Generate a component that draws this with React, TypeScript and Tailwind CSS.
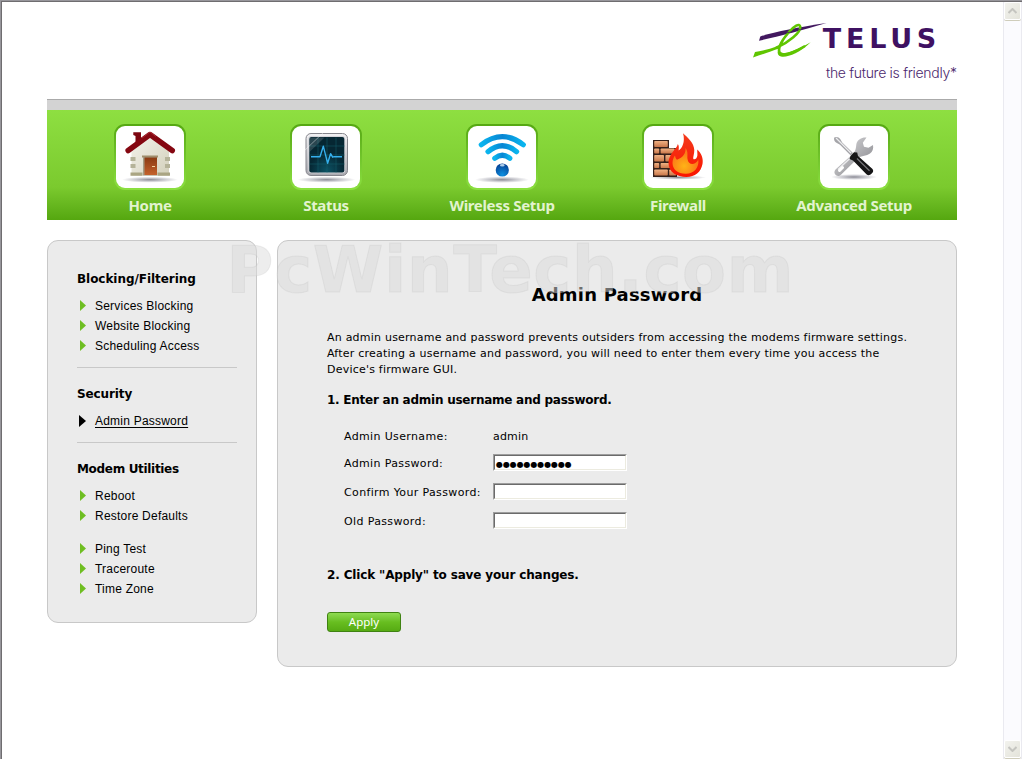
import type { ReactNode } from "react";

interface MenuItem {
  label: string;
  icon: ReactNode;
}

interface LinkGroup {
  title: string;
  tracking: string;
  links: { label: string; active?: boolean; spaced?: boolean }[];
}

function HomeIcon() {
  return (
    <svg width="68" height="62" viewBox="0 0 68 62">
      <defs>
        <radialGradient id="shade">
          <stop offset="0" stopColor="#8c8c96" />
          <stop offset="0.5" stopColor="#c9c9cf" />
          <stop offset="1" stopColor="#ffffff" />
        </radialGradient>
        <linearGradient id="wall" x1="0" y1="0" x2="1" y2="1">
          <stop offset="0" stopColor="#f4f3ec" />
          <stop offset="1" stopColor="#d3d0bb" />
        </linearGradient>
        <linearGradient id="door" x1="0" y1="0" x2="0" y2="1">
          <stop offset="0" stopColor="#8a3a12" />
          <stop offset="1" stopColor="#c4622c" />
        </linearGradient>
      </defs>
      <ellipse cx="34" cy="53.7" rx="28" ry="3" fill="url(#shade)" />
      <path d="M17.300 6.300H25V19l-5.500 4V10l-2.200-1Z" fill="#7d0610" />
      <path d="M34 9 53 25v24.500H15.500V25Z" fill="url(#wall)" />
      <path d="M14.500 31h5v4h-5zM14.500 38h5v4h-5zM49 31h5v4h-5zM49 38h5v4h-5z" fill="#b5b399" />
      <path d="M14.500 46.500h12v3.200h-12zM41.500 46.500h12.500v3.200h-12.500z" fill="#aaa583" />
      <path d="M26 29.500h16v2H26z" fill="#a08e6c" />
      <path d="M27 31h14v18.500H27z" fill="#a39c85" />
      <path d="M28.500 31.500H41V49H28.500z" fill="url(#door)" />
      <path d="M36 40.500h3" stroke="#f5d5a0" />
      <path d="M12.200 24.500 34 8.500l22.200 16" fill="none" stroke="#850711" strokeWidth="5.600" strokeLinecap="round" strokeLinejoin="round" />
      <path d="M26 12 34 6l6 4.500" fill="none" stroke="#b4343c" strokeWidth="0.800" />
    </svg>
  );
}

function StatusIcon() {
  return (
    <svg width="68" height="62" viewBox="0 0 68 62">
      <defs>
        <linearGradient id="frame" x1="0" y1="0" x2="0" y2="1">
          <stop offset="0" stopColor="#f2f2f4" />
          <stop offset="1" stopColor="#a9a9b0" />
        </linearGradient>
        <radialGradient id="screen" cy="0.95">
          <stop offset="0" stopColor="#0c5264" />
          <stop offset="1" stopColor="#062733" />
        </radialGradient>
      </defs>
      <ellipse cx="34.500" cy="53.700" rx="29" ry="3" fill="url(#shade)" />
      <rect x="14" y="7.500" width="41.500" height="42" rx="5" fill="url(#frame)" stroke="#85858c" />
      <rect x="16.300" y="10" width="36.900" height="37.200" rx="3" fill="#d5d5da" />
      <rect x="17.300" y="11" width="35" height="35.500" rx="2" fill="url(#screen)" />
      <path d="M17.500 20h35M17.500 29h35M17.500 38h35M26 11.500v35M35 11.500v35M44 11.500v35" stroke="#17606f" strokeWidth="0.500" />
      <path d="M17.500 11.500h15L17.500 26Z" fill="#fff" opacity="0.150" />
      <path d="m12 25 20-19" stroke="#fff" strokeWidth="0.600" opacity="0.700" />
      <path d="M19 30.700h9l3.300-10.500 4.300 17 3-9.500 2 3.500 1.500-.500H50" fill="none" stroke="#35b0ee" strokeWidth="1.400" strokeLinejoin="round" />
    </svg>
  );
}

function WirelessIcon() {
  return (
    <svg width="68" height="62" viewBox="0 0 68 62">
      <defs>
        <linearGradient id="wave" x1="0" y1="0" x2="1" y2="0">
          <stop offset="0" stopColor="#0ab4ee" />
          <stop offset="0.500" stopColor="#0785d3" />
          <stop offset="1" stopColor="#0ab4ee" />
        </linearGradient>
        <radialGradient id="ball" cx="0.500" cy="0.850" r="0.850">
          <stop offset="0" stopColor="#0b8fe0" />
          <stop offset="1" stopColor="#063e91" />
        </radialGradient>
      </defs>
      <ellipse cx="34" cy="53.700" rx="27" ry="3.200" fill="url(#shade)" />
      <g fill="none" stroke="url(#wave)" strokeLinecap="round" strokeWidth="5.200">
        <path d="M13.300 18.700Q34.300 2.700 55.300 18.700" />
        <path d="M20 25.700Q34.300 13.700 48.600 25.700" />
        <path d="M26.800 32.300Q34.300 26.300 41.800 32.300" />
      </g>
      <circle cx="34.300" cy="44" r="6.600" fill="url(#ball)" />
      <ellipse cx="34.300" cy="39.300" rx="2.400" ry="1.200" fill="#d8efff" opacity="0.800" />
    </svg>
  );
}

function FirewallIcon() {
  return (
    <svg width="68" height="62" viewBox="0 0 68 62">
      <defs>
        <linearGradient id="brick" x1="0" y1="0" x2="0" y2="1">
          <stop offset="0" stopColor="#f0b183" />
          <stop offset="1" stopColor="#c9774a" />
        </linearGradient>
        <linearGradient id="flame" x1="0" y1="0" x2="0" y2="1">
          <stop offset="0" stopColor="#f43a1c" />
          <stop offset="1" stopColor="#fa1500" />
        </linearGradient>
        <radialGradient id="glow" cx="0.450" cy="0.700">
          <stop offset="0" stopColor="#ffb316" />
          <stop offset="1" stopColor="#fb7b18" />
        </radialGradient>
      </defs>
      <ellipse cx="34" cy="51.500" rx="28" ry="2.200" fill="url(#shade)" />
      <path d="M9 14h16v8h8v29H9Z" fill="#35201a" />
      <g fill="url(#brick)">
        <rect x="10.200" y="15" width="13.600" height="6" rx="0.800" />
        <rect x="10.200" y="22.500" width="5" height="5" rx="0.800" />
        <rect x="16.600" y="22.500" width="14" height="5" rx="0.800" />
        <rect x="10.200" y="29" width="9.800" height="6.500" rx="0.800" />
        <rect x="21.400" y="29" width="10" height="6.500" rx="0.800" />
        <rect x="10.200" y="37" width="5" height="5" rx="0.800" />
        <rect x="16.600" y="37" width="13" height="5" rx="0.800" />
        <rect x="10.200" y="43.500" width="13.600" height="6" rx="0.800" />
        <rect x="25.200" y="43.500" width="7" height="6" rx="0.800" />
      </g>
      <path
        d="M39 7.300C44 12 50 17 50.300 24c.1 4-1.500 7-1 9 1.500 1 3.500-.5 4-3 .4-2.300-.3-4.500 0-6.500 4 3.500 6.300 9 5.200 14.500C57 46 51 51 42.500 51 33 51 24.500 46 24.500 37c0-6 3.500-10 6.500-14 1.500-1.800 2.500-3.500 2.800-5 1.500 2 1 4.500.8 6.500 3.500-1.500 6.900-9 4.400-17.200Z"
        fill="url(#flame)"
      />
      <path
        d="M41.500 22c3 4 1.500 7.500 2 11 .5 4.500 4.500 6 7.500 4.200 2-1.200 3-3 3.200-4 1.300 8-3.700 14.300-12.200 14.500C34 47.900 28.500 43.500 28.500 37c0-3 1-5.500 2.500-7.500.3 2 .8 3.300 2 4.300C39 31.500 42 27.500 41.500 22Z"
        fill="url(#glow)"
      />
    </svg>
  );
}

function ToolsIcon() {
  return (
    <svg width="68" height="62" viewBox="0 0 68 62">
      <defs>
        <linearGradient id="steel" x1="0" y1="0" x2="1" y2="1">
          <stop offset="0" stopColor="#e2e2e4" />
          <stop offset="1" stopColor="#7e7e83" />
        </linearGradient>
      </defs>
      <ellipse cx="34" cy="51" rx="23" ry="3" fill="url(#shade)" />
      <path
        d="M34 27 15.500 43.500c-1.700 2-1.300 4.500.5 5.700 2 1.200 3.700 1 5.500-1L38.500 31.500c3.500-1.700 8-1.500 11.500-4 2.500-1.800 3.700-4.500 3-8.500l-4.500 2.800-4.500-1-1.200-4 3.700-5.200c-4.500-.6-8.800 2-10 6-.6 2.600 0 5-2.500 9.400Z"
        fill="url(#steel)"
      />
      <path d="M18 43.500 33 29.500" stroke="#ececee" strokeWidth="1.500" />
      <path d="m19.500 44.500 3-3" stroke="#fff" strokeWidth="3" strokeLinecap="round" />
      <path d="M14.200 11.500c2.300-1.200 4.500-.5 6 1.400l2 3.600L33 27l-2.300 2.500L20 18.700l-4-2.200c-1.700-1.400-2.300-3.200-1.800-5Z" fill="#a5a5a9" />
      <path d="m16 12 5 5 10 10" stroke="#ececee" strokeWidth="1.200" fill="none" />
      <path d="m29.500 33 1-3 3.500-3.800 3.200.3L38 30l14.500 13c1.200 1.800.8 3-.8 4.500s-3.300 2.300-5 1L33 34.500Z" fill="#161617" />
      <path d="m37 32.500 12.500 12.300" stroke="#77777b" strokeWidth="1.200" />
    </svg>
  );
}

function Logo() {
  return (
    <svg className="block" width="208" height="74" viewBox="0 -8 208 74">
      <path d="M8.300 16.500C22 12 45 7.500 74.500 3 50 10.300 28 16 7 20.800Z" fill="#42185f" />
      <path d="M1 37.500 3 32c6-.500 14-2.800 24-6.500l1 2.500C18 32 10 34.500 1 37.500Z" fill="#5fc500" />
      <path
        d="M24 28C37 22.500 49 12 48.300 6.800 47.500 2.500 42 6 37 12 30 20 25 29 28 33c3.500 3.500 14-.500 25-7"
        fill="none"
        stroke="#5fc500"
        strokeWidth="2.500"
      />
      <path d="M26 30c.500 5 10 5 32.700-7.700C47 33.500 35 37.800 29 36.500c-3-.800-4-3-3-6.500Z" fill="#5fc500" />
      <path d="M35 12.600 58 6.700l-12 3.800-13 3.300Z" fill="#42185f" />
      <text
        x="70.800"
        y="28.300"
        textLength="113.500"
        lengthAdjust="spacing"
        className="fill-[#3f1162] font-['DejaVu_Sans'] text-[27px] font-bold"
      >
        TELUS
      </text>
      <text x="74" y="58" textLength="131" lengthAdjust="spacing" className="fill-[#4b286d] font-[Inter] text-[14px] font-light">
        the future is friendly*
      </text>
    </svg>
  );
}

const menu: MenuItem[] = [
  { label: "Home", icon: <HomeIcon /> },
  { label: "Status", icon: <StatusIcon /> },
  { label: "Wireless Setup", icon: <WirelessIcon /> },
  { label: "Firewall", icon: <FirewallIcon /> },
  { label: "Advanced Setup", icon: <ToolsIcon /> },
];

const groups: LinkGroup[] = [
  {
    title: "Blocking/Filtering",
    tracking: "tracking-[-0.05px]",
    links: [{ label: "Services Blocking" }, { label: "Website Blocking" }, { label: "Scheduling Access" }],
  },
  { title: "Security", tracking: "tracking-[-0.1px]", links: [{ label: "Admin Password", active: true }] },
  {
    title: "Modem Utilities",
    tracking: "tracking-[-0.32px]",
    links: [
      { label: "Reboot" },
      { label: "Restore Defaults" },
      { label: "Ping Test", spaced: true },
      { label: "Traceroute" },
      { label: "Time Zone" },
    ],
  },
];

const fields = [
  { label: "Admin Password:", value: "●●●●●●●●●●●" },
  { label: "Confirm Your Password:", value: "" },
  { label: "Old Password:", value: "" },
];

function Sidebar() {
  return (
    <aside className="h-[383px] w-[210px] rounded-[11px] border border-[#c8c8c8] bg-[#ebebeb] pt-3 pr-[19px] pl-[29px]">
      {groups.map((group, i) => (
        <section key={group.title} className={i > 0 ? "mt-[11px] border-t border-[#c8c8c8] pt-[17px]" : "pt-[17px]"}>
          <h2 className={`h-4 text-[12px] leading-[18px] font-bold whitespace-nowrap ${group.tracking}`}>{group.title}</h2>
          <ul className="mt-[10px] font-['Liberation_Sans',sans-serif] text-[12px] leading-5 tracking-[0.22px]">
            {group.links.map((link) => (
              <li key={link.label} className={link.spaced ? "mt-[13px] flex h-5 items-center" : "flex h-5 items-center"}>
                <svg width="18" height="12" viewBox="0 0 18 12">
                  {link.active ? <path d="M2 0v12l7-6Z" fill="#000" /> : <path d="M3 0v11l6-5.500Z" fill="#6fbe22" />}
                </svg>
                <a className={link.active ? "underline underline-offset-2" : ""}>{link.label}</a>
              </li>
            ))}
          </ul>
        </section>
      ))}
    </aside>
  );
}

function PasswordPanel() {
  return (
    <main className="h-[427px] w-[680px] rounded-[11px] border border-[#c8c8c8] bg-[#ebebeb] px-[49px] pt-11">
      <h1 className="h-5 text-center text-[18px] leading-5 font-bold tracking-[0.2px]">Admin Password</h1>
      <p className="mt-[25px] text-[11px] leading-4 tracking-[0.22px] whitespace-nowrap">
        An admin username and password prevents outsiders from accessing the modems firmware settings.
        <br />
        After creating a username and password, you will need to enter them every time you access the
        <br />
        Device's firmware GUI.
      </p>
      <h2 className="mt-[14px] h-4 text-[12px] leading-4 font-bold tracking-[-0.25px]">
        1. Enter an admin username and password.
      </h2>
      <div className="mt-5 ml-[17px] flex flex-col gap-3 text-[11px] leading-[17px] tracking-[0.36px]">
        <div className="-mb-[3px] flex h-[17px]">
          <span className="w-[149px]">Admin Username:</span>
          <span className="tracking-[0.2px]">admin</span>
        </div>
        {fields.map((field) => (
          <div key={field.label} className="flex h-[17px]">
            <label className="w-[149px] leading-[19px] whitespace-nowrap">{field.label}</label>
            <div className="h-[17px] w-[134px] border border-t-[#9d9d9d] border-r-white border-b-white border-l-[#9d9d9d]">
              <div className="h-[15px] border border-t-[#6b6b6b] border-r-[#ecebe0] border-b-[#ecebe0] border-l-[#6b6b6b] bg-white pl-px text-[8px] leading-[18px] tracking-[-0.1px]">
                {field.value}
              </div>
            </div>
          </div>
        ))}
      </div>
      <h2 className="mt-[38px] h-4 text-[12px] leading-4 font-bold tracking-[-0.15px]">
        2. Click "Apply" to save your changes.
      </h2>
      <button className="mt-[29px] block h-5 w-[74px] rounded-[3px] border border-[#3f8212] bg-linear-to-b from-[#8edb50] via-[#68be20] to-[#56ab13] text-center font-['Noto_Sans',sans-serif] text-[11.5px] leading-[16px] text-white">
        Apply
      </button>
    </main>
  );
}

function ScrollButton({ down = false }: { down?: boolean }) {
  return (
    <div className="flex h-[18px] items-center justify-center rounded-[2px] border border-white bg-linear-to-br from-[#f3f3ee] to-[#e3e3da] shadow-[0_1px_0_#cfcdbb]">
      <svg width="9" height="6" viewBox="0 0 9 6" fill="none" stroke="#c5c5c0" strokeWidth="2">
        {down ? <path d="m.5 1 4 4 4-4" /> : <path d="m.5 5 4-4 4 4" />}
      </svg>
    </div>
  );
}

export default function App() {
  return (
    <div className="relative h-[759px] w-[1022px] overflow-hidden border-t border-l border-[#97969b] bg-white font-['DejaVu_Sans',sans-serif] text-black">
      <div className="flex h-[758px] border-t border-l border-[#6f6d70]">
        <div className="w-[955px] pl-[45px]">
          <header className="-mr-[3px] flex h-[97px] justify-end pt-[10px]">
            <Logo />
          </header>
          <div className="h-[11px] border-t border-[#aaa] bg-[#d3d3d3]" />
          <nav className="grid h-[110px] grid-cols-5 bg-linear-to-b from-[#8edf41] via-[#7bca2e] via-70% to-[#55a70f] px-[15px] pt-[14px]">
            {menu.map((item) => (
              <a key={item.label} className="flex flex-col items-center">
                <span className="h-[66px] w-[72px] rounded-[11px] bg-linear-to-b from-[#55a811] to-[#8ce040] p-0.5">
                  <span className="block h-[62px] overflow-hidden rounded-[9px] bg-white">{item.icon}</span>
                </span>
                <span className="mt-1 font-['Noto_Sans',sans-serif] text-[15px] leading-[22px] font-bold tracking-[-0.33px] whitespace-nowrap text-[#e2f3cf]">
                  {item.label}
                </span>
              </a>
            ))}
          </nav>
          <div className="mt-5 flex items-start gap-5">
            <Sidebar />
            <PasswordPanel />
          </div>
        </div>
        <div className="ml-[46px] flex w-[19px] flex-col justify-between border-x border-[#eaeaf0] bg-[#fbfbfe] pb-px">
          <ScrollButton />
          <ScrollButton down />
        </div>
      </div>
      <svg className="pointer-events-none absolute top-[229px] left-[219px]" width="590" height="80">
        <text
          x="6.500"
          y="62"
          textLength="567"
          lengthAdjust="spacing"
          className="fill-[#dcdcdc]/50 stroke-[#b8b8b8]/20 font-['DejaVu_Sans'] text-[64px] font-bold"
        >
          PcWinTech.com
        </text>
      </svg>
    </div>
  );
}
